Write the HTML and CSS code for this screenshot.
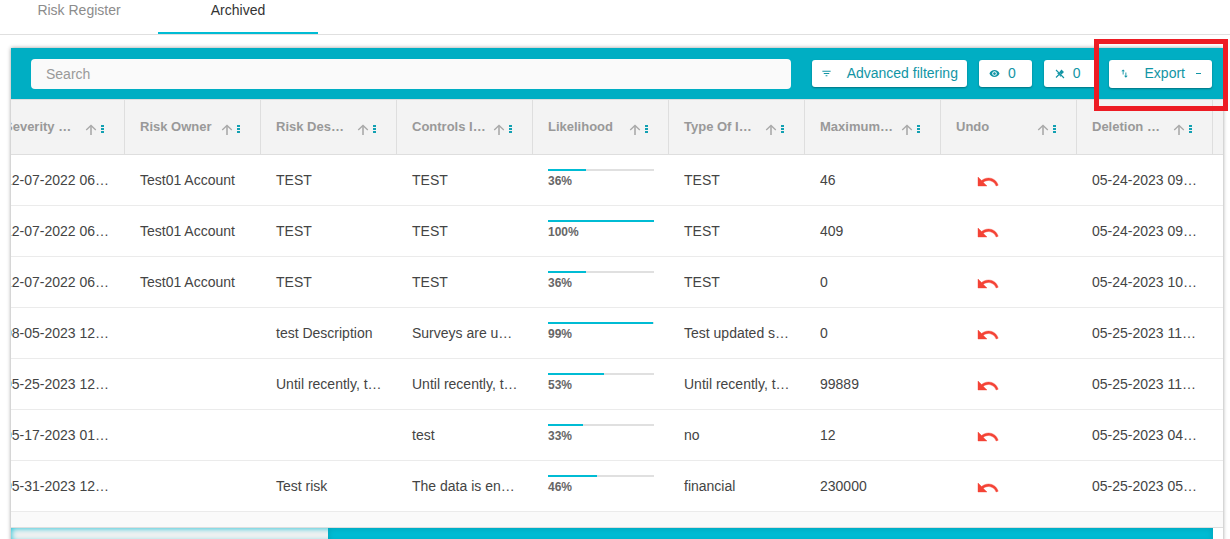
FILE: index.html
```html
<!DOCTYPE html>
<html lang="en">
<head>
<meta charset="utf-8">
<meta name="viewport" content="width=device-width, initial-scale=1">
<title>Risk Register - Archived</title>
<link rel="stylesheet" href="styles.css">
</head>
<body>
<svg class="sprite" aria-hidden="true">
  <symbol id="i-up" viewBox="0 0 12 12"><path d="M6 11V2" fill="none" stroke="#b8b8b8" stroke-width="2"/><path d="M1.200 6L6 1.500 10.800 6" fill="none" stroke="#a8a8a8" stroke-width="1.300"/></symbol>
  <symbol id="i-dots" viewBox="0 0 3 9"><path d="M0 0h3v2H0zM0 3h3v2H0zM0 6h3v2H0z" fill="currentColor"/></symbol>
  <symbol id="i-undo" viewBox="0 0 24 24"><path fill="currentColor" stroke="currentColor" stroke-width=".4" d="M12.5 8c-2.65 0-5.05.99-6.900 2.600L2 7v9h9l-3.620-3.620c1.390-1.160 3.160-1.880 5.120-1.880 3.540 0 6.550 2.310 7.600 5.500l2.070-.78C20.880 11.030 17.150 8 12.500 8z"/></symbol>
</svg>

<nav class="tabs">
  <a class="tab" href="#register">Risk Register</a>
  <a class="tab tab-active" href="#archived" aria-current="page">Archived</a>
</nav>

<main class="card">
  <div class="toolbar">
    <input class="search" type="search" placeholder="Search" aria-label="Search">
    <button class="btn btn-filter" type="button">
      <svg class="icon" viewBox="0 0 24 24"><path fill="currentColor" d="M10 18h4v-2h-4v2zM3 6v2h18V6H3zm3 7h12v-2H6v2z"/></svg>
      <span>Advanced filtering</span>
    </button>
    <button class="btn" type="button" aria-label="Hidden columns: 0">
      <svg class="icon icon-eye" viewBox="0 0 24 24"><path fill="currentColor" d="M12 4.500C7 4.500 2.730 7.610 1 12c1.730 4.390 6 7.500 11 7.500s9.270-3.110 11-7.500c-1.730-4.390-6-7.500-11-7.500zM12 17c-2.760 0-5-2.240-5-5s2.240-5 5-5 5 2.240 5 5-2.240 5-5 5zm0-8c-1.660 0-3 1.340-3 3s1.340 3 3 3 3-1.340 3-3-1.340-3-3-3z"/></svg>
      <span>0</span>
    </button>
    <button class="btn" type="button" aria-label="Pinned columns: 0">
      <svg class="icon" viewBox="0 0 11 11"><path d="M2 2l8 8M2 9.500l3-3" fill="none" stroke="currentColor" stroke-width="1.100"/><path d="M5 4.500L7.500 1.500 10 4 7.500 6.500zM3 5l4 4V7.500L4.500 5z" fill="currentColor"/></svg>
      <span>0</span>
    </button>
    <div class="export">
      <button class="btn btn-export" type="button" aria-haspopup="menu">
        <svg class="icon" viewBox="0 0 24 24"><path fill="currentColor" d="M9 3L5 6.990h3V14h2V6.990h3L9 3zm7 14.010V10h-2v7.010h-3L15 21l4-3.990h-3z"/></svg>
        <span>Export</span>
        <span class="dash"></span>
      </button>
      <div class="highlight"></div>
    </div>
  </div>

  <div class="viewport">
    <table class="grid">
      <colgroup><col class="col" span="9"><col class="col-rest"></colgroup>
      <thead><tr id="head"></tr></thead>
      <tbody id="rows"></tbody>
    </table>
  </div>
  <div class="footer"></div>
  <div class="scroll"><div class="thumb"></div></div>
</main>
<script src="grid.js"></script>
</body>
</html>
```
FILE: styles.css
```css
* { box-sizing: border-box; }

body {
  margin: 0;
  height: 100vh;
  overflow: hidden;
  background: #fff;
  color: #444;
  font: 14px/20px "Liberation Sans", Arial, sans-serif;
}

button, input { font: inherit; }

.sprite { display: none; }

.tabs {
  display: flex;
  height: 35px;
  border-bottom: 1px solid #e0e0e0;
}

.tab {
  width: 160px;
  height: 34px;
  color: #8c8c8c;
  text-align: center;
  text-decoration: none;
}

.tab:first-child { width: 158px; }

.tab-active {
  color: #333;
  border-bottom: 2px solid #00bcd4;
}

.card {
  margin: 13px 7px 0 11px;
  background: #fff;
  box-shadow: 0 0 4px rgba(0, 0, 0, 0.4);
}

.toolbar {
  display: flex;
  align-items: center;
  gap: 12px;
  height: 51px;
  padding: 0 11px 0 20px;
  background: #00aec3;
}

.search {
  flex: 1;
  min-width: 0;
  height: 30px;
  margin-right: 9px;
  padding: 0 15px;
  border: 0;
  border-radius: 4px;
  background: #fafafa;
  appearance: none;
}

.search::placeholder { color: #999; opacity: 1; }

.btn {
  display: flex;
  align-items: center;
  gap: 8px;
  height: 27px;
  padding: 0 16px 1px 10px;
  border: 0;
  border-radius: 3px;
  background: #fff;
  color: #1295a5;
  box-shadow: 0 1px 2px rgba(0, 0, 0, 0.35);
}

.btn-filter { gap: 15px; padding: 0 9px 1px; }

.btn-export { gap: 15px; height: 28px; padding: 0 11px 1px 10px; }

.btn-export .dash { margin-left: -4px; }

.icon { width: 11px; height: 11px; }

.dash { width: 5px; height: 1px; background: currentColor; }

.export { position: relative; }

.highlight {
  position: absolute;
  inset: -21px -16px -23px -15px;
  border: 5px solid #ed1c24;
  pointer-events: none;
}

.viewport { overflow: hidden; }

.grid {
  width: calc(100% + 22px);
  min-width: 1234px;
  margin-left: -22px;
  table-layout: fixed;
  border-collapse: separate;
  border-spacing: 0;
}

.col { width: 136px; }

.grid th {
  height: 56px;
  padding: 0 20px 0 15px;
  border: solid #dedede;
  border-width: 1px 1px 1px 0;
  background: #f3f3f3;
  color: #999;
  font-size: 13px;
  text-align: left;
}

.grid th:last-child { border-right: 0; }

.head { display: flex; align-items: center; gap: 4px; }

.label { flex: 1; white-space: nowrap; }

.sort, .menu {
  display: flex;
  padding: 0;
  border: 0;
  background: none;
}

.sort { margin-top: 6px; }
.sort svg { width: 12px; height: 12px; }

.menu { margin-top: 4px; color: #12a0b2; }
.menu svg { width: 3px; height: 9px; }

.grid td {
  height: 51px;
  padding: 0 15px;
  border-bottom: 1px solid #ebebeb;
  white-space: nowrap;
}

.grid .likelihood {
  padding-top: 14px;
  vertical-align: top;
  color: #666;
  font-size: 12px;
  line-height: 14px;
  font-weight: bold;
}

.bar { height: 2px; margin-bottom: 3px; background: #e0e0e0; }
.fill { height: 2px; background: #00bcd4; }

.grid .undo-cell { padding: 3px 0 0 35px; }

.undo {
  display: block;
  padding: 0;
  border: 0;
  background: none;
  color: #f44336;
}

.undo svg { display: block; width: 24px; height: 24px; }

.footer {
  height: 16px;
  border-bottom: 1px solid #dedede;
  background: #fafafa;
}

.scroll {
  display: flex;
  justify-content: flex-end;
  height: 14px;
  margin-right: 10px;
  background: #f1f1f1;
  box-shadow: inset 0 0 6px #00bcd4;
}

.thumb {
  width: 73.600%;
  background: #00bcd4;
  box-shadow: inset 0 0 6px rgba(0, 90, 110, 0.3);
}
```
FILE: grid.js
```js
const columns = ["Severity …", "Risk Owner", "Risk Des…", "Controls I…", "Likelihood", "Type Of I…", "Maximum…", "Undo", "Deletion …"];

const rows = [
  ["12-07-2022 06…", "Test01 Account", "TEST", "TEST", 36, "TEST", "46", "05-24-2023 09…"],
  ["12-07-2022 06…", "Test01 Account", "TEST", "TEST", 100, "TEST", "409", "05-24-2023 09…"],
  ["12-07-2022 06…", "Test01 Account", "TEST", "TEST", 36, "TEST", "0", "05-24-2023 10…"],
  ["08-05-2023 12…", "", "test Description", "Surveys are u…", 99, "Test updated s…", "0", "05-25-2023 11…"],
  ["05-25-2023 12…", "", "Until recently, t…", "Until recently, t…", 53, "Until recently, t…", "99889", "05-25-2023 11…"],
  ["05-17-2023 01…", "", "", "test", 33, "no", "12", "05-25-2023 04…"],
  ["05-31-2023 12…", "", "Test risk", "The data is en…", 46, "financial", "230000", "05-25-2023 05…"]
];

const icon = (name) => `<svg aria-hidden="true"><use href="#i-${name}"/></svg>`;

document.getElementById("head").innerHTML = columns.map((name) => `
  <th scope="col"><div class="head"><span class="label">${name}</span>
  <button class="sort" type="button" aria-label="Sort">${icon("up")}</button>
  <button class="menu" type="button" aria-label="Column menu">${icon("dots")}</button></div></th>`).join("") + "<th></th>";

const undoCell = `<td class="undo-cell"><button class="undo" type="button" aria-label="Undo">${icon("undo")}</button></td>`;

const cell = (value) => typeof value === "number"
  ? `<td class="likelihood"><div class="bar"><div class="fill" style="width:${value}%"></div></div>${value}%</td>`
  : `<td>${value}</td>`;

document.getElementById("rows").innerHTML = rows.map((row) =>
  `<tr>${row.slice(0, 7).map(cell).join("")}${undoCell}${cell(row[7])}<td></td></tr>`).join("");
```
